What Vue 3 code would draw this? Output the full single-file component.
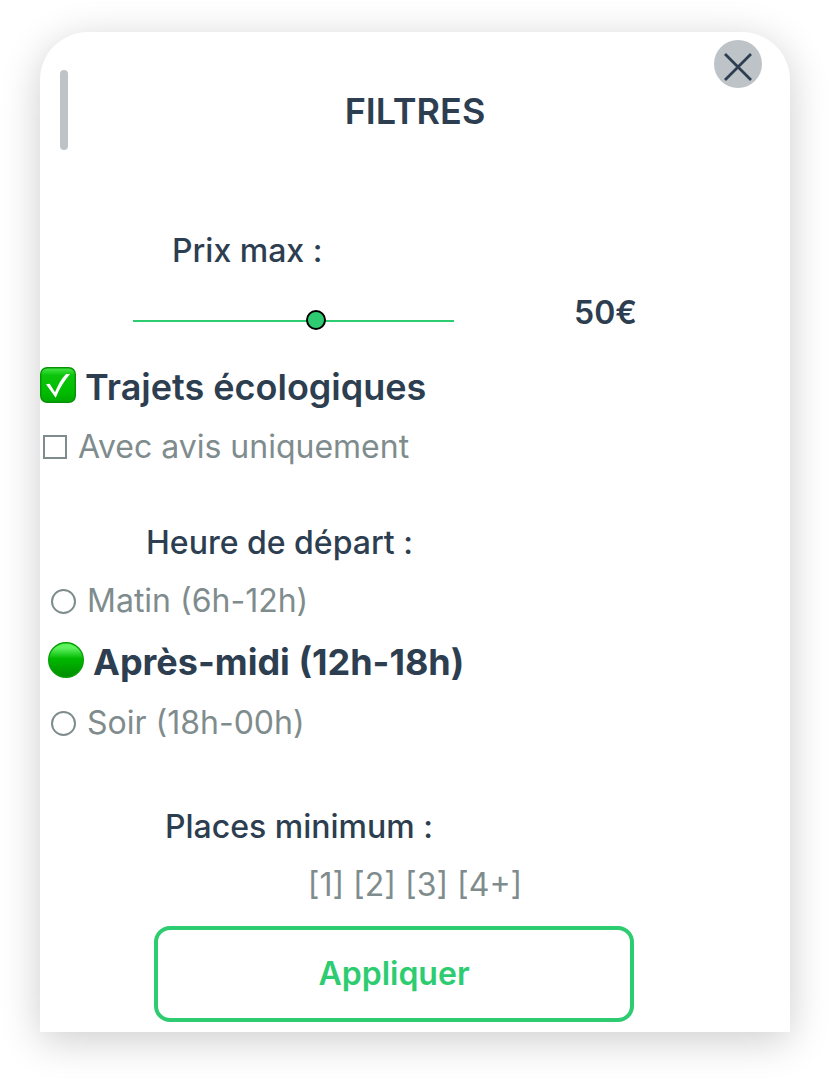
<script setup>
import { ref } from 'vue'

const price = ref(50)
const eco = ref(true)
const reviewed = ref(false)
const slot = ref('midday')
const seats = ref('')
const seatOptions = ['1', '2', '3', '4+']
</script>

<template>
  <main class="page">
    <form class="sheet" @submit.prevent>
      <header class="head">
        <span class="handle"></span>
        <h1 class="title">FILTRES</h1>
        <button class="close" type="button" aria-label="Fermer">
          <svg viewBox="0 0 48 48" aria-hidden="true">
            <path d="M11 14 37 40M37 14 11 40" fill="none" stroke="#2c3e50" stroke-width="2.8" />
          </svg>
        </button>
      </header>

      <section class="price">
        <label class="caption price-caption" for="price">Prix max :</label>
        <div class="price-row">
          <input id="price" v-model="price" class="slider" type="range" min="0" max="87" />
          <output class="amount" for="price">{{ price }}€</output>
        </div>
      </section>

      <section class="options">
        <label class="option strong">
          <span class="mark">
            <input v-model="eco" type="checkbox" class="native" />
            <svg class="glyph" viewBox="0 0 36 36" aria-hidden="true">
              <defs>
                <linearGradient id="box-fill" x1="0" y1="0" x2="0" y2="1">
                  <stop offset="0" stop-color="#4be84b" />
                  <stop offset="0.22" stop-color="#0cc40c" />
                  <stop offset="0.7" stop-color="#00bd00" />
                  <stop offset="1" stop-color="#00a800" />
                </linearGradient>
              </defs>
              <rect x="0.7" y="0.7" width="34.6" height="34.6" rx="6.5" fill="url(#box-fill)" stroke="#079207" stroke-width="1.4" />
              <path v-if="eco" d="M6 17.3 9.7 16.7 15 25.3C18 18 21.500 11.500 26 7H30C24.500 13.500 19.500 21.500 15.700 30.700Z" fill="#fff" />
            </svg>
          </span>
          Trajets écologiques
        </label>
        <label class="option">
          <input v-model="reviewed" type="checkbox" class="box" />
          Avec avis uniquement
        </label>
      </section>

      <fieldset class="times">
        <legend class="caption times-caption">Heure de départ :</legend>
        <label class="option">
          <input v-model="slot" type="radio" name="slot" value="morning" class="ring" />
          Matin (6h-12h)
        </label>
        <label class="option strong bold">
          <span class="mark">
            <input v-model="slot" type="radio" name="slot" value="midday" class="native" />
            <svg class="glyph" viewBox="0 0 36 36" aria-hidden="true">
              <defs>
                <linearGradient id="dot-fill" x1="0" y1="0" x2="0" y2="1">
                  <stop offset="0" stop-color="#58f558" />
                  <stop offset="0.15" stop-color="#60f260" />
                  <stop offset="0.46" stop-color="#00b900" />
                  <stop offset="1" stop-color="#008c00" />
                </linearGradient>
              </defs>
              <circle cx="18" cy="18" r="17.3" fill="url(#dot-fill)" stroke="#05a005" stroke-width="1.4" />
            </svg>
          </span>
          Après-midi (12h-18h)
        </label>
        <label class="option">
          <input v-model="slot" type="radio" name="slot" value="evening" class="ring" />
          Soir (18h-00h)
        </label>
      </fieldset>

      <section class="places" aria-labelledby="places-caption">
        <h2 id="places-caption" class="caption places-caption">Places minimum :</h2>
        <div class="seats">
          <button v-for="n in seatOptions" :key="n" type="button" class="seat" :aria-pressed="seats === n" @click="seats = n">[{{ n }}]</button>
        </div>
      </section>

      <button class="apply" type="submit">Appliquer</button>
    </form>
  </main>
</template>

<style>
body {
  margin: 0;
  background: #fff;
}
</style>

<style scoped>
.page {
  padding: 32px 40px 48px;
  font-family: Inter, "Liberation Sans", sans-serif;
  color: #2c3e50;
}
.sheet {
  display: flex;
  flex-direction: column;
  padding-bottom: 10px;
  background: #fff;
  border-radius: 48px 48px 0 0;
  box-shadow: 0 8px 40px rgba(0, 0, 0, 0.2);
}
button {
  font-family: inherit;
  padding: 0;
  border: 0;
  background: none;
  cursor: pointer;
}
input {
  margin: 0;
}
.head {
  display: grid;
  grid-template-columns: 76px 1fr 76px;
  align-items: start;
}
.handle {
  width: 8px;
  height: 80px;
  margin: 38px 0 0 20px;
  border-radius: 4px;
  background: #bdc3c7;
}
.title {
  margin: 57px 0 0;
  font-size: 36px;
  line-height: 44px;
  font-weight: 600;
  text-align: center;
}
.close {
  width: 48px;
  height: 48px;
  margin-top: 8px;
  border-radius: 50%;
  background: #bdc3c7;
}
.close svg {
  display: block;
  width: 48px;
  height: 48px;
}
.caption {
  display: block;
  margin: 0;
  padding: 0;
  font-size: 32px;
  line-height: 40px;
  font-weight: 500;
}
.price {
  margin-top: 81px;
}
.price-caption {
  padding-left: 132px;
}
.price-row {
  display: flex;
  align-items: center;
  gap: 120px;
  margin-top: 22px;
  padding-left: 93px;
}
.slider {
  appearance: none;
  width: 321px;
  height: 20px;
  margin-top: 14px;
  background: linear-gradient(#2ecc71, #2ecc71) 0 10px / 100% 2px no-repeat;
}
.slider::-webkit-slider-thumb {
  appearance: none;
  box-sizing: border-box;
  width: 20px;
  height: 20px;
  border: 2px solid #000;
  border-radius: 50%;
  background: #2ecc71;
}
.amount {
  font-size: 32px;
  line-height: 40px;
  font-weight: 600;
}
.options {
  display: flex;
  flex-direction: column;
  gap: 18px;
  margin-top: 32px;
}
.option {
  display: flex;
  align-items: center;
  gap: 11px;
  font-size: 32px;
  line-height: 40px;
  font-weight: 400;
  color: #7f8c8d;
}
.strong {
  gap: 9px;
  font-size: 36px;
  line-height: 44px;
  font-weight: 600;
  color: #2c3e50;
}
.bold {
  margin-left: -3px;
  font-weight: 700;
}
.mark {
  display: grid;
  width: 36px;
  height: 36px;
  margin-bottom: 4px;
}
.native,
.glyph {
  grid-area: 1 / 1;
  width: 36px;
  height: 36px;
}
.native {
  opacity: 0;
}
.box {
  appearance: none;
  box-sizing: border-box;
  width: 24px;
  height: 24px;
  margin-left: 3px;
  border: 2px solid #7f8c8d;
}
.ring {
  appearance: none;
  box-sizing: border-box;
  width: 25px;
  height: 25px;
  border: 2px solid #7f8c8d;
  border-radius: 50%;
}
.times {
  display: flex;
  flex-direction: column;
  gap: 19px;
  min-width: 0;
  margin: 56px 0 0;
  padding: 18px 0 0 11px;
  border: 0;
}
.times-caption {
  padding-left: 95px;
}
.places {
  margin-top: 64px;
}
.places-caption {
  padding-left: 125px;
}
.seats {
  display: flex;
  justify-content: center;
  gap: 9px;
  margin-top: 18px;
}
.seat {
  font-size: 32px;
  line-height: 40px;
  font-weight: 400;
  color: #7f8c8d;
}
.apply {
  box-sizing: border-box;
  width: 64%;
  height: 96px;
  margin: 21px 0 0 114px;
  border: 4px solid #2ecc71;
  border-radius: 16px;
  font-size: 32px;
  line-height: 40px;
  font-weight: 600;
  color: #2ecc71;
}
</style>
